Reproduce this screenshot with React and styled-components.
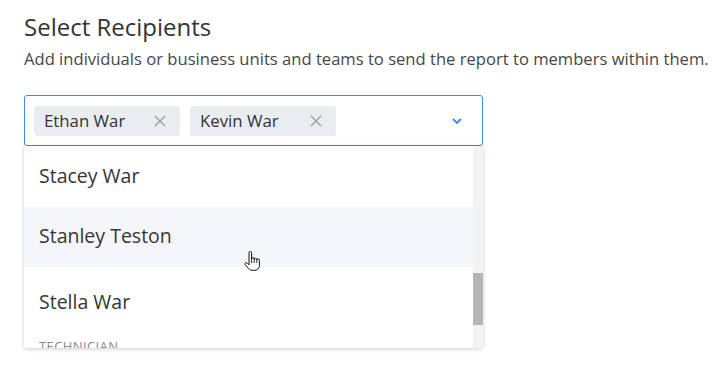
import React from "react";
import styled, { createGlobalStyle } from "styled-components";

const GlobalStyle = createGlobalStyle`
  html, body { margin: 0; padding: 0; background: #fff; }
  body { font-family: "Open Sans", "Noto Sans", sans-serif; color: #333; }
  * { box-sizing: border-box; }
`;

const Page = styled.div`
  position: relative;
  padding: 12px 24px 0 24px;
  height: 366px;
`;

const Title = styled.h1`
  margin: 0;
  font-size: 24px;
  font-weight: 400;
  line-height: 30px;
  color: #333;
`;

const Subtitle = styled.p`
  margin: 6px 0 0 0;
  font-size: 16.6px;
  line-height: 22px;
  color: #474747;
  white-space: nowrap;
`;

const Field = styled.div`
  position: relative;
  width: 459px;
  margin-top: 25px;
`;

const SelectBox = styled.div`
  height: 51px;
  border: 1px solid #3f87ee;
  border-radius: 3px;
  display: flex;
  align-items: center;
  padding: 0 20px 0 9px;
  gap: 10px;
  background: #fff;
`;

const Chip = styled.div`
  width: 146px;
  height: 30px;
  border-radius: 3px;
  background: #e9edf0;
  display: flex;
  align-items: center;
  justify-content: space-between;
  padding: 0 14px 0 10px;
  font-size: 16.8px;
  color: #333;
`;

const ChipX = styled.svg`
  width: 12px;
  height: 12px;
  flex: none;
`;

const Chevron = styled.svg`
  margin-left: auto;
  width: 10px;
  height: 6px;
`;

const Menu = styled.div`
  position: absolute;
  top: 51px;
  left: 0;
  width: 459px;
  height: 202px;
  background: #fff;
  box-shadow: 0 1px 4px rgba(0, 0, 0, 0.2);
  border-radius: 0 0 3px 3px;
  overflow: hidden;
  display: flex;
`;

const List = styled.div`
  flex: 1;
  display: flex;
  flex-direction: column;
`;

const Option = styled.div`
  flex: none;
  height: ${(p) => p.$h || 60}px;
  padding: ${(p) => p.$pt || 0}px 15px 3px 15px;
  display: flex;
  align-items: center;
  font-size: 19.5px;
  color: #353535;
  background: ${(p) => (p.$active ? "#f5f6fa" : "#fff")};
`;

const GroupHeader = styled.div`
  flex: none;
  padding: 11px 15px 0 15px;
  font-size: 13px;
  letter-spacing: 0.4px;
  color: #8a8a8a;
  text-transform: uppercase;
  line-height: 16px;
`;

const Track = styled.div`
  width: 10px;
  background: #f3f3f3;
  padding-top: 127px;
`;

const Thumb = styled.div`
  height: 52px;
  background: #b5b5b5;
`;

const Cursor = styled.svg`
  position: absolute;
  left: 242px;
  top: 251px;
  width: 21px;
  height: 21px;
`;

const XIcon = () => (
  <ChipX viewBox="0 0 12 12">
    <path d="M1 1L11 11M11 1L1 11" stroke="#9b9b9b" strokeWidth="1.4" fill="none" />
  </ChipX>
);

export default function App() {
  return (
    <>
      <GlobalStyle />
      <Page>
        <Title>Select Recipients</Title>
        <Subtitle>
          Add individuals or business units and teams to send the report to members within them.
        </Subtitle>
        <Field>
          <SelectBox>
            <Chip>
              <span>Ethan War</span>
              <XIcon />
            </Chip>
            <Chip>
              <span>Kevin War</span>
              <XIcon />
            </Chip>
            <Chevron viewBox="0 0 10 6">
              <path d="M1 1L5 5L9 1" stroke="#3f87ee" strokeWidth="1.8" fill="none" />
            </Chevron>
          </SelectBox>
          <Menu>
            <List>
              <Option $h={61}>Stacey War</Option>
              <Option $active>Stanley Teston</Option>
              <Option $h={60} $pt={11}>Stella War</Option>
              <GroupHeader>Technician</GroupHeader>
            </List>
            <Track>
              <Thumb />
            </Track>
          </Menu>
        </Field>
        <Cursor viewBox="0 0 21 21">
          <path
            d="M7 1.8a1.3 1.3 0 0 1 2.6 0V8a1.3 1.3 0 0 1 2.6 0v.6a1.3 1.3 0 0 1 2.6 0v.6a1.3 1.3 0 0 1 2.6 0V14.5c0 2.8-2 4.8-4.6 4.8H10.2c-1.5 0-2.6-.6-3.5-1.7L3.2 13.8c-.6-.6-.5-1.5.2-1.9.6-.4 1.4-.3 1.9.2L7 13.8Z"
            fill="#fff"
            stroke="#111"
            strokeWidth="1"
            strokeLinejoin="round"
          />
          <path d="M9.6 8v4M12.2 8.6v3.4M14.8 9.2v2.8" stroke="#111" strokeWidth="0.9" />
        </Cursor>
      </Page>
    </>
  );
}
